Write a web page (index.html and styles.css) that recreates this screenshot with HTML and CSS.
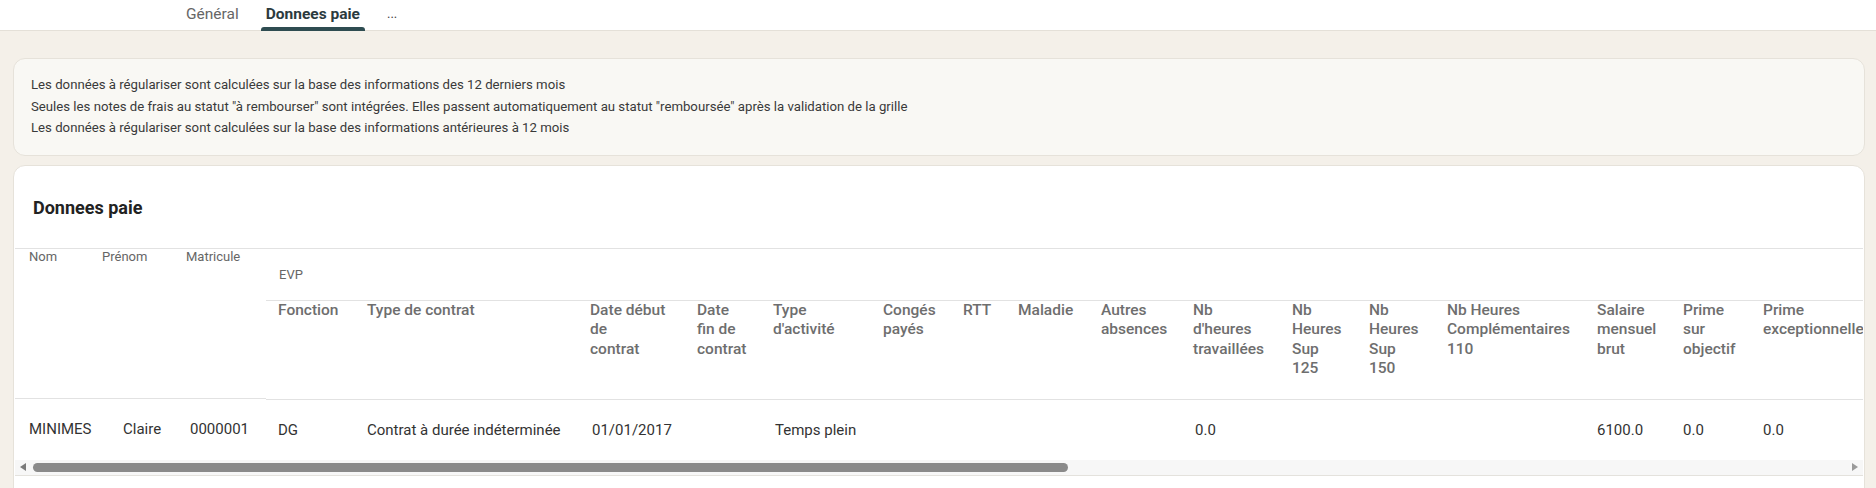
FILE: index.html
```html
<!DOCTYPE html>
<html lang="fr">
<head>
    <meta charset="UTF-8">
    <meta name="viewport" content="width=device-width, initial-scale=1.0">
    <title>Donnees paie</title>
    <link rel="stylesheet" href="styles.css">
</head>
<body>
    <header class="topbar">
        <nav class="tabs">
            <a class="tab">Général</a>
            <a class="tab active">Donnees paie</a>
            <a class="tab more">...</a>
        </nav>
    </header>

    <main class="page">
        <section class="notice">
            <p>Les données à régulariser sont calculées sur la base des informations des 12 derniers mois</p>
            <p>Seules les notes de frais au statut "à rembourser" sont intégrées. Elles passent automatiquement au statut "remboursée" après la validation de la grille</p>
            <p>Les données à régulariser sont calculées sur la base des informations antérieures à 12 mois</p>
        </section>

        <section class="panel">
            <h2 class="panel-title">Donnees paie</h2>

            <div class="grid">
                <!-- colonnes figées -->
                <div class="fixed">
                    <div class="fixed-head">
                        <span class="c-nom">Nom</span>
                        <span class="c-prenom">Prénom</span>
                        <span class="c-matricule">Matricule</span>
                    </div>
                    <div class="fixed-row">
                        <span class="d-nom">MINIMES</span>
                        <span class="d-prenom">Claire</span>
                        <span class="d-matricule">0000001</span>
                    </div>
                </div>

                <!-- colonnes EVP (défilent) -->
                <div class="evp">
                    <div class="evp-title">EVP</div>
                    <table class="evp-table">
                        <colgroup>
                            <col style="width: 89px">
                            <col style="width: 223px">
                            <col style="width: 107px">
                            <col style="width: 76px">
                            <col style="width: 110px">
                            <col style="width: 80px">
                            <col style="width: 55px">
                            <col style="width: 83px">
                            <col style="width: 92px">
                            <col style="width: 99px">
                            <col style="width: 77px">
                            <col style="width: 78px">
                            <col style="width: 150px">
                            <col style="width: 86px">
                            <col style="width: 80px">
                            <col style="width: 130px">
                        </colgroup>
                        <thead>
                            <tr>
                                <th>Fonction</th>
                                <th>Type de contrat</th>
                                <th>Date début<br>de<br>contrat</th>
                                <th>Date<br>fin de<br>contrat</th>
                                <th>Type<br>d'activité</th>
                                <th>Congés<br>payés</th>
                                <th>RTT</th>
                                <th>Maladie</th>
                                <th>Autres<br>absences</th>
                                <th>Nb<br>d'heures<br>travaillées</th>
                                <th>Nb<br>Heures<br>Sup<br>125</th>
                                <th>Nb<br>Heures<br>Sup<br>150</th>
                                <th>Nb Heures<br>Complémentaires<br>110</th>
                                <th>Salaire<br>mensuel<br>brut</th>
                                <th>Prime<br>sur<br>objectif</th>
                                <th>Prime<br>exceptionnelle</th>
                            </tr>
                        </thead>
                        <tbody>
                            <tr>
                                <td>DG</td>
                                <td>Contrat à durée indéterminée</td>
                                <td class="pad">01/01/2017</td>
                                <td></td>
                                <td class="pad">Temps plein</td>
                                <td></td>
                                <td></td>
                                <td></td>
                                <td></td>
                                <td class="pad">0.0</td>
                                <td></td>
                                <td></td>
                                <td></td>
                                <td>6100.0</td>
                                <td>0.0</td>
                                <td>0.0</td>
                            </tr>
                        </tbody>
                    </table>
                </div>
            </div>

            <div class="hscroll">
                <span class="arrow left"></span>
                <div class="track">
                    <div class="thumb"></div>
                </div>
                <span class="arrow right"></span>
            </div>
        </section>
    </main>
</body>
</html>
```

FILE: styles.css
```css
body {
    margin: 0;
    font-family: Roboto, "Liberation Sans", Arial, sans-serif;
    background-color: #f4f0e9;
    color: #333;
    overflow: hidden;
}

/* barre d'onglets */
.topbar {
    height: 30px;
    background-color: #fff;
    border-bottom: 1px solid #e4e0d8;
}
.tabs {
    display: flex;
    gap: 17px;
    margin-left: 181px;
    height: 30px;
}
.tab {
    position: relative;
    padding: 0 5px;
    font-size: 15.5px;
    line-height: 28px;
    color: #666;
    cursor: pointer;
}
.tab.active {
    font-weight: 700;
    color: #2b3a3e;
}
.tab.active::after {
    content: "";
    position: absolute;
    left: 0;
    right: 0;
    bottom: -1px;
    height: 4px;
    background-color: #2e4c51;
    border-radius: 3px 3px 0 0;
}
.tab.more {
    font-size: 13px;
    color: #444;
}

.page {
    padding: 27px 11px 0 13px;
}

/* encadré d'information */
.notice {
    background-color: #f9f8f4;
    border: 1px solid #e6e2da;
    border-radius: 12px;
    padding: 15px 17px 16px;
    margin-bottom: 9px;
}
.notice p {
    margin: 0;
    font-size: 13.2px;
    line-height: 21.5px;
    color: #3a3a3a;
}

.panel {
    background-color: #fff;
    border: 1px solid #e6e2da;
    border-radius: 12px 12px 0 0;
    height: 340px;
}
.panel-title {
    margin: 0;
    height: 82px;
    display: flex;
    align-items: center;
    padding: 2px 19px 0;
    box-sizing: border-box;
    font-size: 18px;
    font-weight: 700;
    color: #222;
}

/* tableau */
.grid {
    display: flex;
    margin: 0 1px;
    border-top: 1px solid #e2e2e2;
    overflow: hidden;
}
.fixed {
    flex: 0 0 251px;
    padding-left: 14px;
    margin-left: -14px;
}
.fixed-head,
.fixed-row {
    display: flex;
    margin-left: 14px;
}
.fixed-head {
    height: 149px;
    border-bottom: 1px solid #e2e2e2;
    margin-left: 0;
    padding-left: 14px;
    font-size: 13px;
    line-height: 15px;
    color: #666;
}
.fixed-row {
    height: 60px;
    align-items: center;
    font-size: 15px;
    color: #333;
}
.c-nom { width: 73px; }
.c-prenom { width: 84px; }
.c-matricule { width: 80px; }
.d-nom { width: 94px; }
.d-prenom { width: 67px; }
.d-matricule { width: 76px; }

.evp {
    flex: 1;
    min-width: 0;
}
.evp-title {
    height: 51px;
    display: flex;
    align-items: center;
    padding-left: 13px;
    font-size: 13px;
    color: #666;
    border-bottom: 1px solid #e2e2e2;
}
.evp-table {
    table-layout: fixed;
    border-collapse: collapse;
    width: 1615px;
}
.evp-table th {
    height: 98px;
    padding: 0 12px;
    vertical-align: top;
    text-align: left;
    font-size: 15.5px;
    font-weight: 500;
    line-height: 19.5px;
    color: #6e6e6e;
    white-space: nowrap;
    border-bottom: 1px solid #e2e2e2;
}
.evp-table td {
    height: 60px;
    padding: 0 12px;
    font-size: 15px;
    line-height: 20px;
    color: #333;
    white-space: nowrap;
}
.evp-table td.pad {
    padding-left: 14px;
}

/* barre de défilement horizontale */
.hscroll {
    display: flex;
    align-items: center;
    height: 15px;
    margin: 0 1px;
    background-color: #f7f7f7;
    border-bottom: 1px solid #e4e2dd;
}
.track {
    flex: 1;
    height: 9px;
}
.thumb {
    width: 1035px;
    height: 9px;
    margin-left: 7px;
    background-color: #8a8a8a;
    border-radius: 5px;
}
.arrow {
    width: 0;
    height: 0;
    border-top: 4px solid transparent;
    border-bottom: 4px solid transparent;
}
.arrow.left {
    margin-left: 5px;
    border-right: 6px solid #7a7a7a;
}
.arrow.right {
    margin-right: 5px;
    border-left: 6px solid #9a9a9a;
}
```
